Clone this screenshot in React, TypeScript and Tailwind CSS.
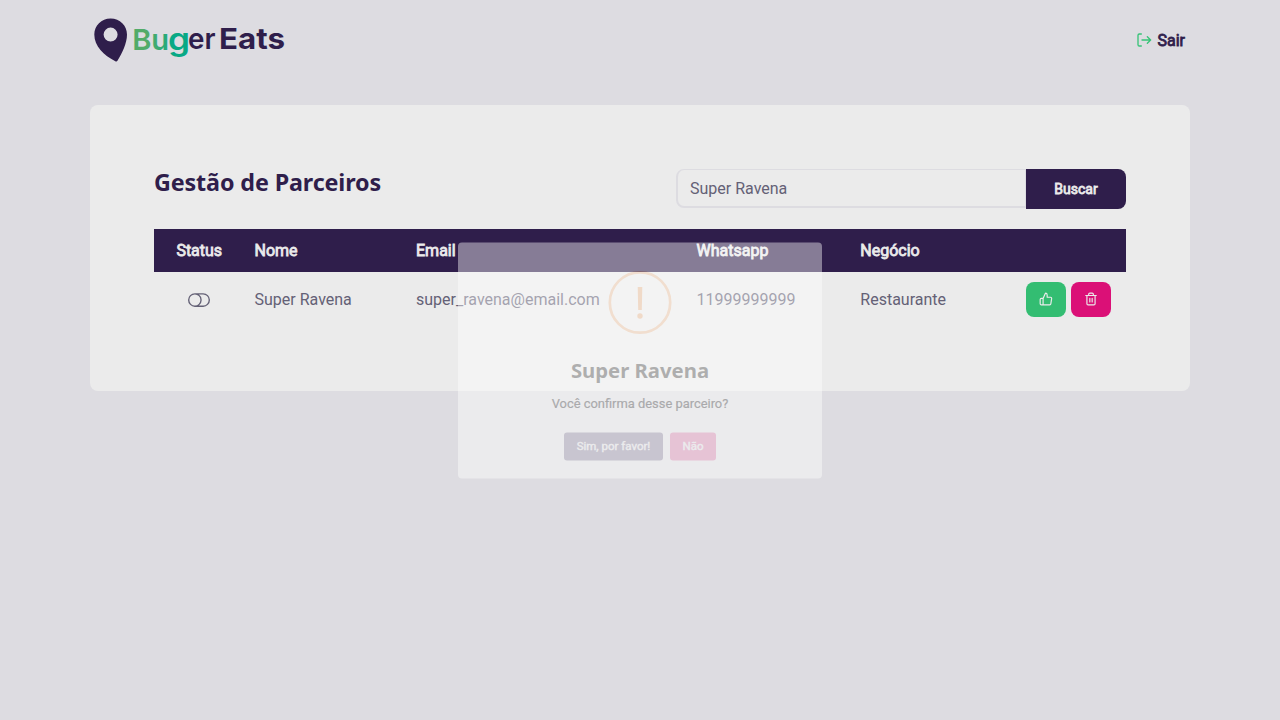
import type { ReactNode } from "react";
import { BsToggleOff } from "react-icons/bs";

const COLUMNS = "grid grid-cols-[90px_162px_280px_164px_161px_1fr] items-center";
const HEAVY = "[-webkit-text-stroke:0.8px_currentColor]";

function Stroke({ size, width, children }: { size: number; width: number; children: ReactNode }) {
  return (
    <svg width={size} height={size} viewBox="0 0 24 24" fill="none" stroke="currentColor" strokeWidth={width} strokeLinecap="round" strokeLinejoin="round">
      {children}
    </svg>
  );
}

function Logo() {
  return (
    <svg width="196" height="48" viewBox="0 0 196 48" className="font-['Inter',sans-serif] text-[29px]">
      <defs>
        <linearGradient id="brand" gradientUnits="userSpaceOnUse" x1="44" y1="0" x2="80" y2="0">
          <stop offset="0.4" stopColor="#52ab69" />
          <stop offset="1" stopColor="#1faa7e" />
        </linearGradient>
      </defs>
      <path fill="#2f1e4b" fillRule="evenodd" d="M20.6 2.4C11.4 2.4 4.3 9.4 4.3 18.6c0 11.5 9.5 21 21 26.6.9.5 1.8.3 2.3-.6C32 37.5 37 27.5 37 18.6 37 9.4 30 2.4 20.6 2.4Zm0 9.2a7 7 0 1 1 0 14 7 7 0 0 1 0-14Z" />
      <text x="42.2" y="33.6" fill="url(#brand)" fontWeight="600" textLength="37" lengthAdjust="spacingAndGlyphs">Bu</text>
      <text x="78" y="34" fill="#08a985" fontWeight="600" textLength="22" lengthAdjust="spacingAndGlyphs" className="text-[31px]">g</text>
      <text x="98" y="33.3" fill="#2f1e4b" fontWeight="600" textLength="27.5" lengthAdjust="spacingAndGlyphs">er</text>
      <text x="129" y="33.3" fill="#2f1e4b" fontWeight="700" textLength="66" lengthAdjust="spacingAndGlyphs">Eats</text>
    </svg>
  );
}

function ConfirmDialog() {
  return (
    <div className="fixed inset-0 flex items-center justify-center">
      <div className="flex h-[236px] w-[364px] translate-y-[0.5px] flex-col items-center rounded-[4px] bg-white pt-[28px] opacity-[0.42]">
        <svg width="64" height="64" viewBox="0 0 64 64" fill="none">
          <circle cx="32" cy="32" r="30.2" stroke="#f9cda9" strokeWidth="2.7" />
          <path d="M29.7 16.4h4.6l-.5 23.2h-3.6Z" fill="#f8c39a" />
          <circle cx="32" cy="45.5" r="2.7" fill="#f8c39a" />
        </svg>
        <h2 className="mt-[20px] font-['Noto_Sans',sans-serif] text-[20.3px] leading-[30px] font-bold text-[#5c5c5c]">Super Ravena</h2>
        <p className="mt-[10px] text-[12.9px] leading-[18px] text-[#636363] [-webkit-text-stroke:0.2px_currentColor]">Você confirma desse parceiro?</p>
        <div className="mt-[20px] flex gap-[7px] text-[11.5px] text-white">
          <button className="h-[28px] w-[99px] rounded-[3px] bg-[#aba4b9] [-webkit-text-stroke:0.4px_currentColor]">Sim, por favor!</button>
          <button className="h-[28px] w-[46px] rounded-[3px] bg-[#f3a0c7] [-webkit-text-stroke:0.4px_currentColor]">Não</button>
        </div>
      </div>
    </div>
  );
}

export default function App() {
  return (
    <div className="min-h-screen bg-[#dddce1] font-['Roboto',sans-serif] text-base text-[#646176]">
      <div className="mx-auto w-[1100px]">
        <header className="flex h-[105px] items-start justify-between pt-4 pr-[5px]">
          <Logo />
          <a className="mt-3 flex items-start gap-[5px] leading-6 text-[#2f1e4b]">
            <span className="pt-1 text-[#37c377]">
              <Stroke size={16} width={2}>
                <path d="M8 21H5a2 2 0 0 1-2-2V5a2 2 0 0 1 2-2h3M17 17l5-5-5-5M22 12H9" />
              </Stroke>
            </span>
            <span className={`pt-px ${HEAVY}`}>Sair</span>
          </a>
        </header>
        <main className="h-[286px] rounded-lg bg-[#ebebeb] p-16">
          <div className="flex h-[40px] items-start justify-between">
            <h1 className="font-['Noto_Sans',sans-serif] text-[23.3px] leading-[26px] font-bold tracking-[-0.12px] text-[#2f1e4b]">Gestão de Parceiros</h1>
            <div className="flex h-full items-start">
              <input
                className="h-[39px] w-[350px] rounded-l-lg border-t border-r border-b-2 border-l-2 border-[#dddce1] bg-transparent px-3 text-[#646176] outline-none"
                defaultValue="Super Ravena"
              />
              <button className={`h-[40px] w-[100px] rounded-r-lg bg-[#2f1e4b] text-[14px] text-[#ebebeb] ${HEAVY}`}>Buscar</button>
            </div>
          </div>
          <div className={`${COLUMNS} ${HEAVY} mt-5 h-[43px] bg-[#2f1e4b] text-[#ebebeb]`}>
            <span className="pl-[0.5px] text-center">Status</span>
            <span className="pl-[10.5px]">Nome</span>
            <span className="pl-[10px]">Email</span>
            <span className="pl-[10.5px]">Whatsapp</span>
            <span className="pl-[10.3px]">Negócio</span>
          </div>
          <div className={`${COLUMNS} h-[55px]`}>
            <span className="flex justify-center"><BsToggleOff size={22} /></span>
            <span className="pl-[10.5px]">Super Ravena</span>
            <span className="pl-[10px]">super_ravena@email.com</span>
            <span className="pl-[10.5px]">11999999999</span>
            <span className="pl-[10.3px]">Restaurante</span>
            <span className="flex gap-[5px] pl-[15px] text-[#ebebeb]">
              <button className="flex h-[35px] w-[40px] items-center justify-center rounded-lg bg-[#33bd72] pb-px">
                <Stroke size={14} width={2}>
                  <path d="M14 9V5a3 3 0 0 0-3-3l-4 9v11h11.28a2 2 0 0 0 2-1.7l1.38-9a2 2 0 0 0-2-2.3zM7 22H4a2 2 0 0 1-2-2v-7a2 2 0 0 1 2-2h3" />
                </Stroke>
              </button>
              <button className="flex h-[35px] w-[40px] items-center justify-center rounded-lg bg-[#db1077] pb-px">
                <Stroke size={14} width={2}>
                  <path d="M3 6h18M19 6v14a2 2 0 0 1-2 2H7a2 2 0 0 1-2-2V6M8 6V4a2 2 0 0 1 2-2h4a2 2 0 0 1 2 2v2M10 11v6M14 11v6" />
                </Stroke>
              </button>
            </span>
          </div>
        </main>
      </div>
      <ConfirmDialog />
    </div>
  );
}
